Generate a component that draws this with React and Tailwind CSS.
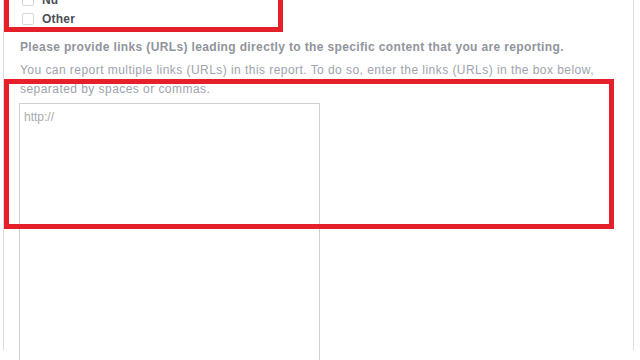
import React from 'react';

const options = ['Nu', 'Other'];

function Checkbox({ label }) {
  return (
    <label className="flex items-center h-[19px] gap-[8px]">
      <span className="w-[12px] h-[12px] rounded-[2px] border border-[#d5d7db] bg-white" />
      <span className="text-[12px] font-bold text-[#4b4f56] tracking-[0.2px]">{label}</span>
    </label>
  );
}

export default function App() {
  return (
    <div
      className="relative w-[640px] h-[360px] overflow-hidden bg-white"
      style={{ fontFamily: '"Liberation Sans", Arial, sans-serif' }}
    >
      <div className="ml-[3px] w-[631px] h-full border-x border-[#dadde1] pl-[16px] pr-4">
        <div className="mt-[-10px] pl-[2px] flex flex-col">
          {options.map((o) => (
            <Checkbox key={o} label={o} />
          ))}
        </div>
        <p className="mt-[12px] text-[12px] leading-[15px] font-bold text-[#90949c] tracking-[0.36px]">
          Please provide links (URLs) leading directly to the specific content that you are reporting.
        </p>
        <p className="mt-[6px] text-[12px] leading-[19px] text-[#9ea3ad] w-[600px] tracking-[0.45px]">
          You can report multiple links (URLs) in this report. To do so, enter the links (URLs) in the box below, separated by spaces or commas.
        </p>
        <textarea
          className="block mt-[4px] ml-[-1px] w-[301px] h-[300px] border border-[#cfd1d5] px-[4px] py-[4px] text-[12px] resize-none outline-none placeholder:text-[#a8abb0]"
          placeholder="http://"
        />
      </div>

      {/* annotation boxes */}
      <div className="absolute left-[4px] top-[-6px] w-[279px] h-[38px] border-[5px] border-[#e5202b]" />
      <div className="absolute left-[4px] top-[79px] w-[610px] h-[150px] border-[5px] border-[#e5202b]" />
    </div>
  );
}
